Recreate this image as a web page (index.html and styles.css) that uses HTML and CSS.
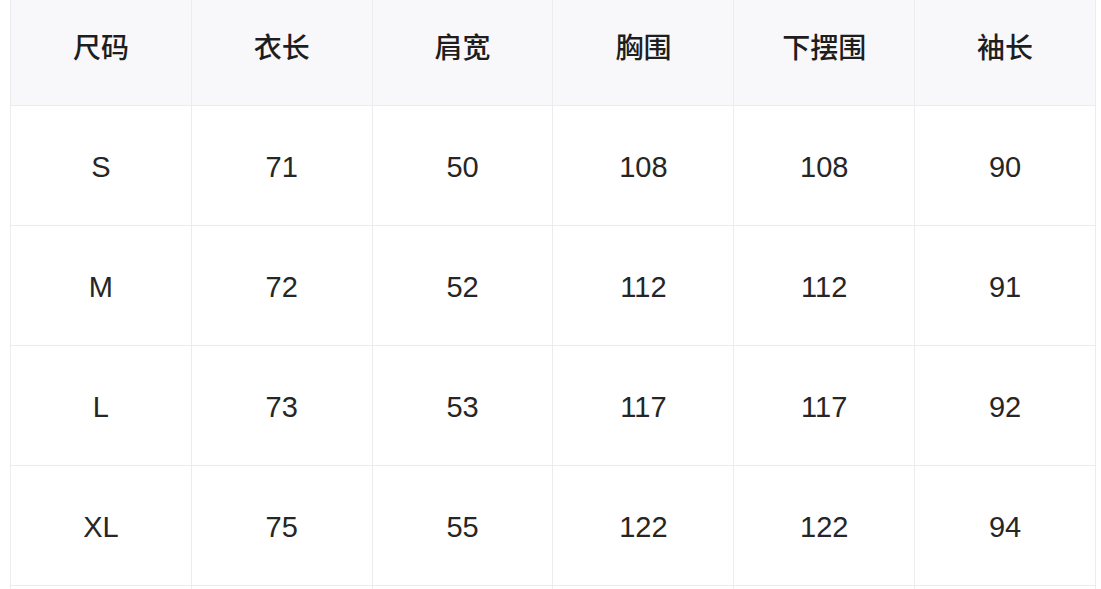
FILE: index.html
```html
<!DOCTYPE html>
<html lang="zh-CN">
<head>
<meta charset="utf-8">
<link rel="stylesheet" href="styles.css">
</head>
<body>
<div class="wrap">
<table class="size-table">
  <thead>
    <tr><th>尺码</th><th>衣长</th><th>肩宽</th><th>胸围</th><th>下摆围</th><th>袖长</th></tr>
  </thead>
  <tbody>
    <tr><td>S</td><td>71</td><td>50</td><td>108</td><td>108</td><td>90</td></tr>
    <tr><td>M</td><td>72</td><td>52</td><td>112</td><td>112</td><td>91</td></tr>
    <tr><td>L</td><td>73</td><td>53</td><td>117</td><td>117</td><td>92</td></tr>
    <tr><td>XL</td><td>75</td><td>55</td><td>122</td><td>122</td><td>94</td></tr>
    <tr class="more"><td></td><td></td><td></td><td></td><td></td><td></td></tr>
  </tbody>
</table>
</div>
</body>
</html>
```
FILE: styles.css
```css
html, body {
  margin: 0;
  padding: 0;
  background: #ffffff;
  overflow: hidden;
}
.wrap {
  padding-left: 10px;
  height: 589px;
  overflow: hidden;
}
.size-table {
  width: 1086px;
  table-layout: fixed;
  border-collapse: collapse;
  color: #1e1e1e;
}
.size-table th,
.size-table td {
  border: 1px solid #ececef;
  text-align: center;
  vertical-align: middle;
  padding: 0;
  box-sizing: border-box;
}
.size-table th {
  border-top: none;
  height: 105px;
  background: #f8f8fb;
  font-family: "Noto Sans CJK SC", "Noto Sans", sans-serif;
  font-weight: 500;
  font-size: 28px;
  padding-bottom: 12px;
}
.size-table td {
  height: 120px;
  font-family: "Liberation Sans", Arial, sans-serif;
  font-size: 29px;
  padding-top: 4px;
  color: #262626;
}
```
